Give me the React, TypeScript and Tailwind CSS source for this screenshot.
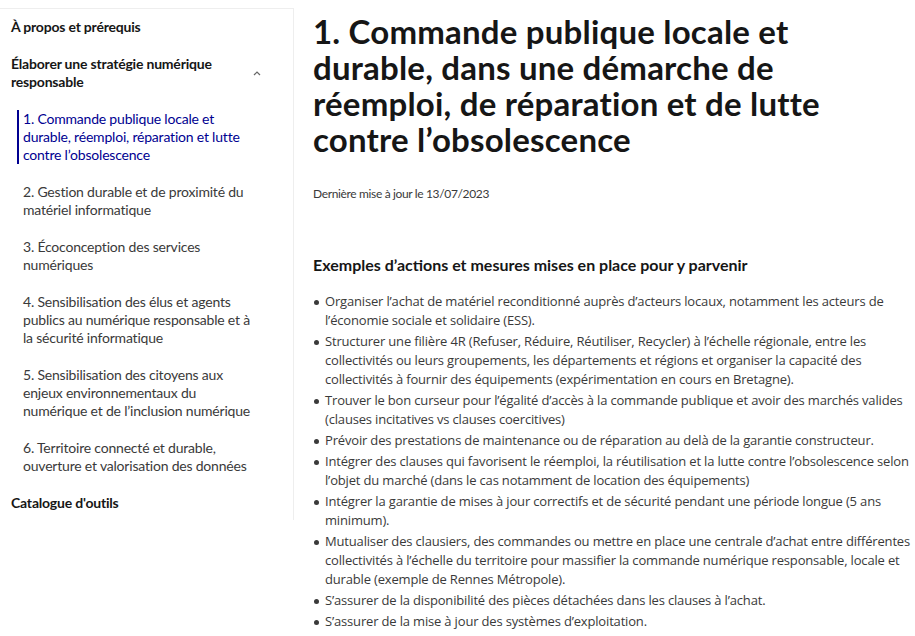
import React from "react";

const M = { fontFamily: 'Lato, Arial, sans-serif' };
const B = { fontFamily: '"Open Sans", Arial, sans-serif' };

const items = [
  "Organiser l’achat de matériel reconditionné auprès d’acteurs locaux, notamment les acteurs de l’économie sociale et solidaire (ESS).",
  "Structurer une filière 4R (Refuser, Réduire, Réutiliser, Recycler) à l’échelle régionale, entre les collectivités ou leurs groupements, les départements et régions et organiser la capacité des collectivités à fournir des équipements (expérimentation en cours en Bretagne).",
  "Trouver le bon curseur pour l’égalité d’accès à la commande publique et avoir des marchés valides (clauses incitatives vs clauses coercitives)",
  "Prévoir des prestations de maintenance ou de réparation au delà de la garantie constructeur.",
  "Intégrer des clauses qui favorisent le réemploi, la réutilisation et la lutte contre l’obsolescence selon l’objet du marché (dans le cas notamment de location des équipements)",
  "Intégrer la garantie de mises à jour correctifs et de sécurité pendant une période longue (5 ans minimum).",
  "Mutualiser des clausiers, des commandes ou mettre en place une centrale d’achat entre différentes collectivités à l’échelle du territoire pour massifier la commande numérique responsable, locale et durable (exemple de Rennes Métropole).",
  "S’assurer de la disponibilité des pièces détachées dans les clauses à l’achat.",
  "S’assurer de la mise à jour des systèmes d’exploitation.",
];

const sub = [
  "2. Gestion durable et de proximité du matériel informatique",
  "3. Écoconception des services numériques",
  "4. Sensibilisation des élus et agents publics au numérique responsable et à la sécurité informatique",
  "5. Sensibilisation des citoyens aux enjeux environnementaux du numérique et de l’inclusion numérique",
  "6. Territoire connecté et durable, ouverture et valorisation des données",
];

export default function App() {
  return (
    <div className="flex bg-white w-[915px] h-[636px] overflow-hidden">
      <aside
        className="w-[294px] shrink-0 self-start mt-[8px] h-[512px] border-r border-t border-[#eeeeee] pl-[11px] pr-[14px] pt-[9px] text-[14px] leading-[18px] tracking-[-0.2px] text-[#3a3a3a]"
        style={M}
      >
        <div className="flex flex-col gap-[19px]">
          <div className="font-bold text-[#161616]">À propos et prérequis</div>
          <div className="flex items-center justify-between font-bold text-[#161616]">
            <span className="w-[225px]">Élaborer une stratégie numérique responsable</span>
            <svg width="10" height="6" viewBox="0 0 10 6" className="mr-[17px] mt-[0px]">
              <path d="M2 5 L5 2 L8 5" fill="none" stroke="#666" strokeWidth="1.2" />
            </svg>
          </div>
          <div className="ml-[6px] w-[239px] border-l-2 border-[#000091] pl-[4px] text-[#000091]">
            1. Commande publique locale et durable, réemploi, réparation et lutte contre l’obsolescence
          </div>
          {sub.map((s) => (
            <div key={s} className="ml-[12px] w-[233px]">
              {s}
            </div>
          ))}
          <div className="font-bold text-[#161616]">Catalogue d'outils</div>
        </div>
      </aside>
      <main className="ml-[19px] flex-1 pt-[13px] pr-[5px]">
        <h1 className="text-[33px] leading-[36px] tracking-[0.2px] font-bold text-[#161616] pr-[60px]" style={M}>
          1. Commande publique locale et durable, dans une démarche de réemploi, de réparation et de lutte contre l’obsolescence
        </h1>
        <p className="mt-[28px] text-[12px] leading-[18px] tracking-[-0.35px] text-[#3a3a3a]" style={M}>
          Dernière mise à jour le 13/07/2023
        </p>
        <h2 className="mt-[50px] text-[16px] leading-[24px] font-bold text-[#161616]" style={M}>
          Exemples d’actions et mesures mises en place pour y parvenir
        </h2>
        <ul className="mt-[15px] flex flex-col gap-[2px] text-[13px] leading-[19px] tracking-[-0.17px] text-[#3a3a3a]" style={B}>
          {items.map((t) => (
            <li key={t} className="flex">
              <span className="w-[12px] shrink-0 pl-[1px] pt-[8px]">
                <span className="block w-[5px] h-[5px] rounded-full bg-[#3a3a3a]" />
              </span>
              <span>{t}</span>
            </li>
          ))}
        </ul>
      </main>
    </div>
  );
}
